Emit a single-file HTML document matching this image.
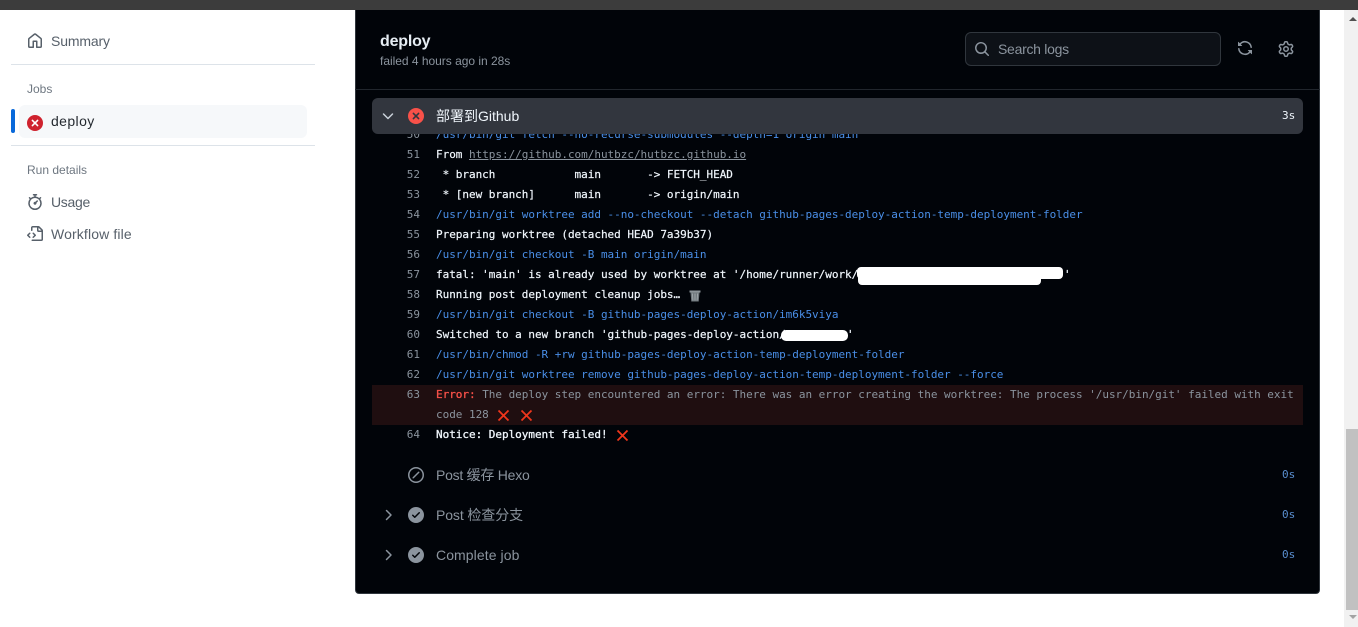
<!DOCTYPE html>
<html>
<head>
<meta charset="utf-8">
<style>
html,body{margin:0;padding:0;width:1358px;height:627px;overflow:hidden;background:#fff;}
body{position:relative;font-family:"Liberation Sans","Noto Sans CJK SC",sans-serif;}
.a{position:absolute;white-space:pre;}
svg{position:absolute;display:block;}
.s{font-size:14px;line-height:20px;color:#57606a;left:51px;letter-spacing:-.1px;}
.h{font-size:12px;line-height:18px;color:#6e7781;left:27px;font-weight:400;}
#panel{position:absolute;left:355px;top:10px;width:963px;height:583px;background:#010409;border:1px solid #30363d;border-top:0;border-radius:0 0 4px 4px;}
.n,.l{position:absolute;font-family:"DejaVu Sans Mono","Noto Sans CJK SC",monospace;font-size:11px;line-height:20px;height:20px;white-space:pre;letter-spacing:-.025px;}
.n{left:380px;width:40px;text-align:right;color:#8b949e;}
.l{left:436px;color:#f0f6fc;font-weight:400;}
.b{color:#4a8fe8;font-weight:400;}
.w{color:#f0f6fc;-webkit-text-stroke:.2px #f0f6fc;}
.w span{-webkit-text-stroke:0;}
.step{position:absolute;left:436px;font-size:14px;line-height:20px;color:#8b949e;white-space:pre;}
.t{position:absolute;left:1282px;font-family:"DejaVu Sans Mono",monospace;font-size:11px;line-height:20px;color:#5a8fd0;}
</style>
</head>
<body>
<div class="a" style="left:0;top:0;width:1358px;height:10px;background:#3c3c3c"></div>

<!-- sidebar -->
<svg style="left:27px;top:33px" width="16" height="16" viewBox="0 0 16 16" fill="#57606a"><path d="M6.906.664a1.749 1.749 0 0 1 2.187 0l5.25 4.2c.415.332.657.835.657 1.367v7.019A1.75 1.75 0 0 1 13.25 15h-3.5a.75.75 0 0 1-.75-.75V9H7v5.25a.75.75 0 0 1-.75.75h-3.5A1.75 1.75 0 0 1 1 13.25V6.23c0-.531.242-1.034.657-1.366l5.25-4.2Zm1.25 1.171a.25.25 0 0 0-.312 0l-5.25 4.2a.25.25 0 0 0-.094.196v7.019c0 .138.112.25.25.25H5.5V8.25a.75.75 0 0 1 .75-.75h3.5a.75.75 0 0 1 .75.75v5.25h2.75a.25.25 0 0 0 .25-.25V6.23a.25.25 0 0 0-.094-.195Z"/></svg>
<div class="a s" style="top:31px;letter-spacing:-.15px">Summary</div>
<div class="a" style="left:11px;top:64px;width:304px;height:1px;background:#dde3e9"></div>
<div class="a h" style="top:80px">Jobs</div>
<div class="a" style="left:19px;top:105px;width:288px;height:33px;background:#f6f8fa;border-radius:6px"></div>
<div class="a" style="left:11px;top:109px;width:4px;height:24px;background:#0969da;border-radius:2px"></div>
<svg style="left:27px;top:115px" width="16" height="16" viewBox="0 0 16 16"><circle cx="8" cy="8" r="8" fill="#cf222e"/><path d="M5.4 5.4l5.2 5.2M10.6 5.4l-5.2 5.2" stroke="#fff" stroke-width="1.6" stroke-linecap="round"/></svg>
<div class="a s" style="top:111px;color:#24292f;letter-spacing:.4px">deploy</div>
<div class="a" style="left:11px;top:145px;width:304px;height:1px;background:#dde3e9"></div>
<div class="a h" style="top:161px">Run details</div>
<svg style="left:27px;top:194px" width="16" height="16" viewBox="0 0 16 16" fill="#57606a"><path d="M5.75.75A.75.75 0 0 1 6.5 0h3a.75.75 0 0 1 0 1.5h-.75v1l-.001.041a6.724 6.724 0 0 1 3.464 1.435l.007-.006.75-.75a.749.749 0 0 1 1.06 1.06l-.75.75-.006.007a6.75 6.75 0 1 1-10.548 0L2.72 5.03l-.75-.75a.751.751 0 0 1 1.06-1.06l.75.75.007.006A6.72 6.72 0 0 1 7.25 2.541V1.5H6.5a.75.75 0 0 1-.75-.75ZM8 14.5a5.25 5.25 0 1 0-.001-10.501A5.25 5.25 0 0 0 8 14.5Zm.389-6.7 1.33-1.33a.75.75 0 1 1 1.061 1.06L9.45 8.861A1.503 1.503 0 0 1 8 10.75a1.499 1.499 0 1 1 .389-2.95Z"/></svg>
<div class="a s" style="top:192px;letter-spacing:-.3px">Usage</div>
<svg style="left:27px;top:226px" width="16" height="16" viewBox="0 0 16 16" fill="#57606a"><path d="M4 1.75C4 .784 4.784 0 5.75 0h5.586c.464 0 .909.184 1.237.513l2.914 2.914c.329.328.513.773.513 1.237v8.586A1.75 1.75 0 0 1 14.25 15h-9a.75.75 0 0 1 0-1.5h9a.25.25 0 0 0 .25-.25V6h-2.75A1.75 1.75 0 0 1 10 4.25V1.5H5.75a.25.25 0 0 0-.25.25v2.5a.75.75 0 0 1-1.5 0Zm1.72 4.97a.75.75 0 0 1 1.06 0l2 2a.75.75 0 0 1 0 1.06l-2 2a.749.749 0 0 1-1.275-.326.749.749 0 0 1 .215-.734l1.47-1.47-1.47-1.47a.75.75 0 0 1 0-1.06ZM3.28 7.78 1.81 9.25l1.47 1.47a.751.751 0 0 1-.018 1.042.751.751 0 0 1-1.042.018l-2-2a.75.75 0 0 1 0-1.06l2-2a.751.751 0 0 1 1.042.018.751.751 0 0 1 .018 1.042Zm8.22-6.218V4.25c0 .138.112.25.25.25h2.688l-.011-.013-2.914-2.914-.013-.011Z"/></svg>
<div class="a s" style="top:224px;letter-spacing:.13px">Workflow file</div>

<!-- panel -->
<div id="panel"></div>
<div class="a" style="left:380px;top:30px;font-size:16px;line-height:24px;font-weight:700;color:#e6edf3;letter-spacing:-.2px">deploy</div>
<div class="a" style="left:380px;top:52px;font-size:12px;line-height:18px;color:#8b949e;letter-spacing:-.02px">failed 4 hours ago in 28s</div>
<div class="a" style="left:965px;top:32px;width:254px;height:32px;background:#0d1117;border:1px solid #30363d;border-radius:6px"></div>
<svg style="left:974px;top:41px" width="16" height="16" viewBox="0 0 16 16" fill="#8b949e"><path d="M10.68 11.74a6 6 0 0 1-7.922-8.982 6 6 0 0 1 8.982 7.922l3.04 3.04a.749.749 0 0 1-.326 1.275.749.749 0 0 1-.734-.215ZM11.5 7a4.499 4.499 0 1 0-8.997 0A4.499 4.499 0 0 0 11.5 7Z"/></svg>
<div class="a" style="left:998px;top:39px;font-size:14px;line-height:20px;color:#8b949e;letter-spacing:-.28px">Search logs</div>
<svg style="left:1237px;top:40px" width="16" height="16" viewBox="0 0 16 16" fill="#8b949e"><path d="M1.705 8.005a.75.75 0 0 1 .834.656 5.5 5.5 0 0 0 9.592 2.97l-1.204-1.204a.25.25 0 0 1 .177-.427h3.646a.25.25 0 0 1 .25.25v3.646a.25.25 0 0 1-.427.177l-1.38-1.38A7.002 7.002 0 0 1 1.05 8.84a.75.75 0 0 1 .656-.834ZM8 2.5a5.487 5.487 0 0 0-4.131 1.869l1.204 1.204A.25.25 0 0 1 4.896 6H1.25A.25.25 0 0 1 1 5.75V2.104a.25.25 0 0 1 .427-.177l1.38 1.38A7.002 7.002 0 0 1 14.95 7.16a.75.75 0 0 1-1.49.178A5.5 5.5 0 0 0 8 2.5Z"/></svg>
<svg style="left:1278px;top:41px" width="16" height="16" viewBox="0 0 16 16" fill="#8b949e"><path d="M8 0a8.2 8.2 0 0 1 .701.031C9.444.095 9.99.645 10.16 1.29l.288 1.107c.018.066.079.158.212.224.231.114.454.243.668.386.123.082.233.09.299.071l1.103-.303c.644-.176 1.392.021 1.82.63.27.385.506.792.704 1.218.315.675.111 1.422-.364 1.891l-.814.806c-.049.048-.098.147-.088.294.016.257.016.515 0 .772-.01.147.038.246.088.294l.814.806c.475.469.679 1.216.364 1.891a7.977 7.977 0 0 1-.704 1.217c-.428.61-1.176.807-1.82.63l-1.102-.302c-.067-.019-.177-.011-.3.071a5.909 5.909 0 0 1-.668.386c-.133.066-.194.158-.211.224l-.29 1.106c-.168.646-.715 1.196-1.458 1.26a8.006 8.006 0 0 1-1.402 0c-.743-.064-1.289-.614-1.458-1.26l-.289-1.106c-.018-.066-.079-.158-.212-.224a5.738 5.738 0 0 1-.668-.386c-.123-.082-.233-.09-.299-.071l-1.103.303c-.644.176-1.392-.021-1.82-.63a8.12 8.12 0 0 1-.704-1.218c-.315-.675-.111-1.422.363-1.891l.815-.806c.05-.048.098-.147.088-.294a6.214 6.214 0 0 1 0-.772c.01-.147-.038-.246-.088-.294l-.815-.806C.635 6.045.431 5.298.746 4.623a7.92 7.92 0 0 1 .704-1.217c.428-.61 1.176-.807 1.82-.63l1.102.302c.067.019.177.011.3-.071.214-.143.437-.272.668-.386.133-.066.194-.158.211-.224l.29-1.106C6.009.645 6.556.095 7.299.03 7.53.01 7.764 0 8 0Zm-.571 1.525c-.036.003-.108.036-.137.146l-.289 1.105c-.147.561-.549.967-.998 1.189-.173.086-.34.183-.5.29-.417.278-.97.423-1.529.27l-1.103-.303c-.109-.03-.175.016-.195.045-.22.312-.412.644-.573.99-.014.031-.021.11.059.19l.815.806c.411.406.562.957.53 1.456a4.709 4.709 0 0 0 0 .582c.032.499-.119 1.05-.53 1.456l-.815.806c-.081.08-.073.159-.059.19.162.346.353.677.573.989.02.03.085.076.195.046l1.102-.303c.56-.153 1.113-.008 1.53.27.161.107.328.204.501.29.447.222.85.629.997 1.189l.289 1.105c.029.109.101.143.137.146a6.6 6.6 0 0 0 1.142 0c.036-.003.108-.036.137-.146l.289-1.105c.147-.561.549-.967.998-1.189.173-.086.34-.183.5-.29.417-.278.97-.423 1.529-.27l1.103.303c.109.029.175-.016.195-.045.22-.313.411-.644.573-.99.014-.031.021-.11-.059-.19l-.815-.806c-.411-.406-.562-.957-.53-1.456a4.709 4.709 0 0 0 0-.582c-.032-.499.119-1.05.53-1.456l.815-.806c.081-.08.073-.159.059-.19a6.464 6.464 0 0 0-.573-.989c-.02-.03-.085-.076-.195-.046l-1.102.303c-.56.153-1.113.008-1.53-.27a4.44 4.44 0 0 0-.501-.29c-.447-.222-.85-.629-.997-1.189l-.289-1.105c-.029-.11-.101-.143-.137-.146a6.6 6.6 0 0 0-1.142 0ZM11 8a3 3 0 1 1-6 0 3 3 0 0 1 6 0ZM9.5 8a1.5 1.5 0 1 0-3.001.001A1.5 1.5 0 0 0 9.5 8Z"/></svg>
<div class="a" style="left:355px;top:89px;width:965px;height:1px;background:#21262d"></div>

<!-- log lines -->
<div class="n" style="top:125px">50</div><div class="l b" style="top:125px">/usr/bin/git fetch --no-recurse-submodules --depth=1 origin main</div>

<div class="a" style="left:372px;top:98px;width:931px;height:36px;background:#32363e;border-radius:6px"></div>
<svg style="left:380px;top:108px" width="16" height="16" viewBox="0 0 16 16" fill="none" stroke="#c9d1d9" stroke-width="1.5" stroke-linecap="round" stroke-linejoin="round"><path d="M3.5 6l4.5 4.5L12.5 6"/></svg>
<svg style="left:408px;top:108px" width="16" height="16" viewBox="0 0 16 16"><circle cx="8" cy="8" r="8" fill="#f85149"/><path d="M5.4 5.4l5.2 5.2M10.6 5.4l-5.2 5.2" stroke="#32363e" stroke-width="1.6" stroke-linecap="round"/></svg>
<div class="a" style="left:436px;top:106px;font-size:14px;line-height:20px;color:#f0f6fc">部署到Github</div>
<div class="t" style="top:106px;color:#f0f6fc">3s</div>

<div class="n" style="top:145px">51</div><div class="l w" style="top:145px">From <span style="color:#8b949e;text-decoration:underline">https://github.com/hutbzc/hutbzc.github.io</span></div>
<div class="n" style="top:165px">52</div><div class="l w" style="top:165px"> * branch            main       -&gt; FETCH_HEAD</div>
<div class="n" style="top:185px">53</div><div class="l w" style="top:185px"> * [new branch]      main       -&gt; origin/main</div>
<div class="n" style="top:205px">54</div><div class="l b" style="top:205px">/usr/bin/git worktree add --no-checkout --detach github-pages-deploy-action-temp-deployment-folder</div>
<div class="n" style="top:225px">55</div><div class="l w" style="top:225px">Preparing worktree (detached HEAD 7a39b37)</div>
<div class="n" style="top:245px">56</div><div class="l b" style="top:245px">/usr/bin/git checkout -B main origin/main</div>
<div class="n" style="top:265px">57</div><div class="l w" style="top:265px">fatal: 'main' is already used by worktree at '/home/runner/work/</div>
<div class="l w" style="top:265px;left:1064px">'</div>
<div class="a" style="left:857px;top:267px;width:206px;height:12px;background:#fff;border-radius:4px"></div>
<div class="a" style="left:858px;top:274px;width:183px;height:11px;background:#fff;border-radius:4px"></div>
<div class="n" style="top:285px">58</div><div class="l w" style="top:285px">Running post deployment cleanup jobs…</div>
<svg style="left:689px;top:289px" width="12" height="13" viewBox="0 0 12 13"><path d="M0.5 1.5h11v2h-11z" fill="#8c9499"/><path d="M1.5 3.5h9l-.8 9h-7.4z" fill="#6f777c"/><path d="M3.5 4.5l.4 7M6 4.5v7M8.500 4.500l-.4 7" stroke="#a9b0b4" stroke-width=".8"/></svg>
<div class="n" style="top:305px">59</div><div class="l b" style="top:305px">/usr/bin/git checkout -B github-pages-deploy-action/im6k5viya</div>
<div class="n" style="top:325px">60</div><div class="l w" style="top:325px">Switched to a new branch 'github-pages-deploy-action/</div>
<div class="l w" style="top:325px;left:847px">'</div>
<div class="a" style="left:781px;top:330px;width:67px;height:11px;background:#fff;border-radius:5px"></div>
<div class="n" style="top:345px">61</div><div class="l b" style="top:345px">/usr/bin/chmod -R +rw github-pages-deploy-action-temp-deployment-folder</div>
<div class="n" style="top:365px">62</div><div class="l b" style="top:365px">/usr/bin/git worktree remove github-pages-deploy-action-temp-deployment-folder --force</div>

<div class="a" style="left:372px;top:385px;width:931px;height:40px;background:#1f0e10"></div>
<div class="n" style="top:385px">63</div>
<div class="l" style="top:385px;color:#8b949e"><span style="color:#f85149;-webkit-text-stroke:.3px #f85149">Error:</span> The deploy step encountered an error: There was an error creating the worktree: The process '/usr/bin/git' failed with exit</div>
<div class="l" style="top:405px;color:#8b949e">code 128</div>
<svg style="left:497px;top:409px" width="13" height="13" viewBox="0 0 13 13"><path d="M1.500 1.500l10 10M11.500 1.500l-10 10" stroke="#f0361c" stroke-width="1.800"/></svg>
<svg style="left:520px;top:409px" width="13" height="13" viewBox="0 0 13 13"><path d="M1.500 1.500l10 10M11.500 1.500l-10 10" stroke="#f0361c" stroke-width="1.800"/></svg>
<div class="n" style="top:425px">64</div><div class="l w" style="top:425px;-webkit-text-stroke:.3px #f0f6fc">Notice: Deployment failed!</div>
<svg style="left:616px;top:429px" width="13" height="13" viewBox="0 0 13 13"><path d="M1.500 1.500l10 10M11.500 1.500l-10 10" stroke="#f0361c" stroke-width="1.800"/></svg>

<!-- steps -->
<svg style="left:408px;top:467px" width="16" height="16" viewBox="0 0 16 16" fill="#8b949e"><path d="M0 8a8 8 0 1 1 16 0A8 8 0 0 1 0 8Zm1.500 0a6.500 6.500 0 1 0 13 0 6.500 6.500 0 0 0-13 0Zm9.780-2.220-5.500 5.500a.749.749 0 0 1-1.275-.326.749.749 0 0 1 .215-.734l5.500-5.500a.751.751 0 0 1 1.042.018.751.751 0 0 1 .018 1.042Z"/></svg>
<div class="step" style="top:465px;letter-spacing:-.25px">Post 缓存 Hexo</div>
<div class="t" style="top:465px">0s</div>

<svg style="left:381px;top:507px" width="16" height="16" viewBox="0 0 16 16" fill="none" stroke="#8b949e" stroke-width="1.500" stroke-linecap="round" stroke-linejoin="round"><path d="M5.500 3.500L10 8l-4.500 4.500"/></svg>
<svg style="left:408px;top:507px" width="16" height="16" viewBox="0 0 16 16" fill="#8b949e"><path d="M8 16A8 8 0 1 1 8 0a8 8 0 0 1 0 16Zm3.780-9.720a.751.751 0 0 0-.018-1.042.751.751 0 0 0-1.042-.018L6.750 9.190 5.280 7.720a.751.751 0 0 0-1.042.018.751.751 0 0 0-.018 1.042l2 2a.75.75 0 0 0 1.060 0Z"/></svg>
<div class="step" style="top:505px;letter-spacing:-.1px">Post 检查分支</div>
<div class="t" style="top:505px">0s</div>

<svg style="left:381px;top:547px" width="16" height="16" viewBox="0 0 16 16" fill="none" stroke="#8b949e" stroke-width="1.500" stroke-linecap="round" stroke-linejoin="round"><path d="M5.500 3.500L10 8l-4.500 4.500"/></svg>
<svg style="left:408px;top:547px" width="16" height="16" viewBox="0 0 16 16" fill="#8b949e"><path d="M8 16A8 8 0 1 1 8 0a8 8 0 0 1 0 16Zm3.780-9.720a.751.751 0 0 0-.018-1.042.751.751 0 0 0-1.042-.018L6.750 9.190 5.280 7.720a.751.751 0 0 0-1.042.018.751.751 0 0 0-.018 1.042l2 2a.75.75 0 0 0 1.060 0Z"/></svg>
<div class="step" style="top:545px;letter-spacing:.08px">Complete job</div>
<div class="t" style="top:545px">0s</div>

<!-- scrollbar -->
<div class="a" style="left:1344px;top:10px;width:14px;height:617px;background:#f1f1f1"></div>
<div class="a" style="left:1346px;top:429px;width:12px;height:181px;background:#c1c1c1"></div>
<svg style="left:1349px;top:16px" width="8" height="6" viewBox="0 0 8 6"><path d="M0 5L4 1l4 4z" fill="#505050"/></svg>
<svg style="left:1349px;top:614px" width="8" height="6" viewBox="0 0 8 6"><path d="M0 1l4 4 4-4z" fill="#a3a3a3"/></svg>
</body>
</html>
